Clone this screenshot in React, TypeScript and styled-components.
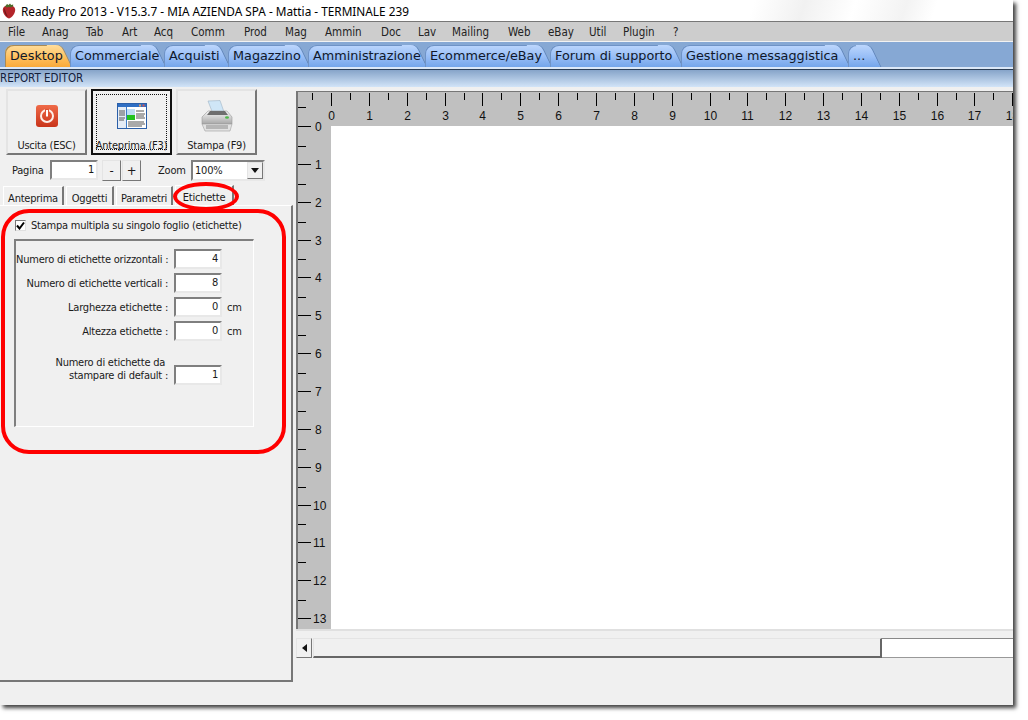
import React from 'react';
import styled, { createGlobalStyle } from 'styled-components';

const UI_FONT = '"DejaVu Sans Condensed", "DejaVu Sans", sans-serif';
const RULER_FONT = '"Liberation Sans", Arial, sans-serif';
const TAB_FONT = '"DejaVu Sans", Verdana, sans-serif';

const GlobalStyle = createGlobalStyle`
  html, body {
    margin: 0;
    padding: 0;
    background: #fff;
  }
  body {
    font-family: ${UI_FONT};
    font-stretch: condensed;
    font-size: 11px;
    letter-spacing: -0.22px;
    color: #1a1a1a;
  }
`;

const Page = styled.div`
  width: 1028px;
  height: 720px;
  overflow: hidden;
`;

const Window = styled.div`
  position: relative;
  width: 1013px;
  height: 705px;
  display: flex;
  flex-direction: column;
  background: #f0f0f0;
  box-shadow: 3px 3px 4px rgba(0, 0, 0, 0.75);
`;

const TitleBar = styled.div`
  height: 21px;
  display: flex;
  align-items: center;
  gap: 5px;
  padding-left: 2px;
  font-family: "Noto Sans", sans-serif;
  font-stretch: normal;
  font-size: 11.8px;
  letter-spacing: normal;
  color: #000;
  background: linear-gradient(108deg, #fff 0, #fff 74%, #f1f1f1 79%, #fff 84%, #f3f3f3 89%, #fff 92%);
  border-bottom: 1px solid #777;
`;

const MenuBar = styled.div`
  height: 19px;
  display: flex;
  align-items: center;
  padding-left: 8px;
  background: #cdcdcd;
  border-bottom: 1px solid #f2f2f2;
`;

const MenuItem = styled.span<{ $width: number }>`
  width: ${(p) => p.$width}px;
  font-size: 11.5px;
  letter-spacing: normal;
  color: #222;
`;

const TabBar = styled.div`
  height: 25px;
  display: flex;
  align-items: flex-end;
  padding-left: 5px;
  background: #86a8d4;
  border-bottom: 2px solid #dbe8f8;
  box-shadow: 0 2px 0 #2c3e55;
  margin-bottom: 1px;
`;

const tabFill = (active?: boolean) =>
  active
    ? 'linear-gradient(#ffdd9c, #ffc15e 55%, #f8a93a)'
    : 'linear-gradient(#bcd6fd, #96bdf6 55%, #74a5ea)';

const MainTab = styled.div<{ $width: number; $active?: boolean }>`
  position: relative;
  width: ${(p) => p.$width}px;
  height: 22px;
  box-sizing: border-box;
  padding-left: 5px;
  line-height: 21px;
  font-family: ${TAB_FONT};
  font-stretch: normal;
  font-size: 12.8px;
  letter-spacing: normal;
  color: #10182a;
  white-space: nowrap;
  &::before {
    content: '';
    position: absolute;
    left: 0;
    right: 10px;
    top: 0;
    bottom: 0;
    border-radius: 8px 4px 0 0;
    background: ${(p) => tabFill(p.$active)};
    box-shadow: inset 1px 1px 0 ${(p) => (p.$active ? '#a98a55' : '#6f93c6')};
  }
  &::after {
    content: '';
    position: absolute;
    right: 4px;
    top: 0;
    bottom: 0;
    width: 14px;
    transform: skewX(26deg);
    border-radius: 0 5px 0 0;
    background: ${(p) => tabFill(p.$active)};
    box-shadow: 1px 0 0 ${(p) => (p.$active ? '#a98a55' : '#5f84ba')};
  }
`;

const TabLabel = styled.span`
  position: relative;
  z-index: 1;
`;

const EditorHeader = styled.div`
  height: 17px;
  line-height: 16px;
  font-size: 11.5px;
  letter-spacing: normal;
  color: #14203a;
  background: linear-gradient(#86a4c9, #d2e4f8);
`;

const Body = styled.div`
  flex: 1;
  display: flex;
  min-height: 0;
`;

const LeftColumn = styled.div`
  width: 293px;
  margin-bottom: 23px;
  display: flex;
  flex-direction: column;
  padding-top: 2px;
  box-sizing: border-box;
`;

const ButtonRow = styled.div`
  display: flex;
  gap: 4px;
  padding-left: 6px;
`;

const ToolButton = styled.div<{ $focused?: boolean }>`
  width: 81px;
  height: 66px;
  box-sizing: border-box;
  display: flex;
  flex-direction: column;
  align-items: center;
  background: #f0f0f0;
  border: 2px solid;
  border-color: ${(p) => (p.$focused ? '#111' : '#e4e4e4 #777 #777 #e4e4e4')};
  line-height: 14px;
  white-space: nowrap;
  outline: ${(p) => (p.$focused ? '1px dotted #111' : 'none')};
  outline-offset: -6px;
`;

const IconSlot = styled.div`
  height: 47px;
  margin-top: 1px;
  display: flex;
  align-items: center;
  justify-content: center;
`;

const PagerRow = styled.div`
  display: flex;
  align-items: center;
  height: 22px;
  margin-top: 4px;
`;

const PagerLabel = styled.span<{ $left: number; $width: number }>`
  margin-left: ${(p) => p.$left}px;
  width: ${(p) => p.$width}px;
`;

const Sunken = styled.div<{ $width: number }>`
  width: ${(p) => p.$width}px;
  height: 20px;
  box-sizing: border-box;
  flex: none;
  background: #fff;
  border: 2px solid;
  border-color: #7f7f7f #e8e8e8 #e8e8e8 #7f7f7f;
  text-align: right;
  padding-right: 2px;
  line-height: 15px;
`;

const StepButton = styled.div<{ $left: number }>`
  width: 19px;
  height: 21px;
  margin-left: ${(p) => p.$left}px;
  box-sizing: border-box;
  border: 1px solid;
  border-color: #e4e4e4 #777 #777 #e4e4e4;
  text-align: center;
  line-height: 20px;
  font-size: 13px;
`;

const SelectBox = styled.div`
  width: 74px;
  height: 21px;
  box-sizing: border-box;
  display: flex;
  align-items: center;
  justify-content: space-between;
  background: #fff;
  border: 2px solid;
  border-color: #7f7f7f #e8e8e8 #e8e8e8 #7f7f7f;
  padding-left: 2px;
`;

const SelectArrow = styled.div`
  width: 16px;
  height: 17px;
  box-sizing: border-box;
  display: flex;
  align-items: center;
  justify-content: center;
  background: #f0f0f0;
  border: 1px solid;
  border-color: #e4e4e4 #777 #777 #e4e4e4;
  &::after {
    content: '';
    border: 4px solid transparent;
    border-top: 5px solid #111;
    border-bottom: none;
  }
`;

const PageTabs = styled.div`
  display: flex;
  align-items: flex-end;
  gap: 2px;
  height: 19px;
  margin-top: 5px;
  padding-left: 3px;
`;

const PageTab = styled.div<{ $width: number; $active?: boolean }>`
  width: ${(p) => p.$width}px;
  height: ${(p) => (p.$active ? 20 : 19)}px;
  box-sizing: border-box;
  text-align: center;
  line-height: 23px;
  border-top: 1px solid #fff;
  border-left: 1px solid #fff;
  border-right: 2px solid #777;
  background: #f0f0f0;
`;

const TabPage = styled.div`
  flex: 1;
  display: flex;
  flex-direction: column;
  box-sizing: border-box;
  border-top: 1px solid #fff;
  border-right: 2px solid #777;
  border-bottom: 2px solid #777;
  padding: 14px 0 0 15px;
`;

const CheckRow = styled.div`
  display: flex;
  align-items: center;
  gap: 5px;
  height: 11px;
`;

const CheckBox = styled.div`
  width: 11px;
  height: 11px;
  box-sizing: border-box;
  background: #fff;
  border: 1px solid;
  border-color: #777 #e0e0e0 #e0e0e0 #777;
  display: flex;
  align-items: center;
  justify-content: center;
`;

const GroupBox = styled.div`
  width: 240px;
  height: 188px;
  box-sizing: border-box;
  margin: 8px 0 0 -1px;
  padding-top: 8px;
  border: 2px solid;
  border-color: #7f7f7f #fff #fff #7f7f7f;
  border-right-width: 1px;
  border-bottom-width: 1px;
  display: flex;
  flex-direction: column;
`;

const FieldRow = styled.div<{ $gap?: number }>`
  display: flex;
  align-items: center;
  height: 20px;
  margin-bottom: ${(p) => p.$gap ?? 4}px;
`;

const FieldLabel = styled.div<{ $raised?: boolean }>`
  width: 152px;
  flex: none;
  text-align: right;
  line-height: 13px;
  white-space: nowrap;
  margin-right: 6px;
  margin-bottom: ${(p) => (p.$raised ? 12 : 0)}px;
`;

const Unit = styled.span`
  margin-left: 5px;
`;

const RightColumn = styled.div`
  flex: 1;
  min-width: 0;
  display: flex;
  flex-direction: column;
  margin-left: 3px;
  padding-top: 4px;
`;

const RulerFrame = styled.div`
  height: 538px;
  display: flex;
  flex-direction: column;
  overflow: hidden;
  border-bottom: 2px solid #e0e0e0;
`;

const SheetRow = styled.div`
  flex: 1;
  display: flex;
  min-height: 0;
`;

const RulerSvg = styled.svg`
  display: block;
  flex: none;
  overflow: visible;
  font-family: ${RULER_FONT};
  font-stretch: normal;
  font-size: 12px;
  letter-spacing: normal;
`;

const Sheet = styled.div`
  flex: 1;
  background: #fff;
`;

const ScrollBar = styled.div`
  display: flex;
  height: 20px;
  margin-top: 7px;
`;

const ScrollArrow = styled.div`
  width: 16px;
  box-sizing: border-box;
  display: flex;
  align-items: center;
  justify-content: center;
  border: 1px solid;
  border-color: #e4e4e4 #777 #777 #e4e4e4;
  &::after {
    content: '';
    border: 4px solid transparent;
    border-right: 5px solid #111;
    border-left: none;
  }
`;

const ScrollThumb = styled.div`
  width: 569px;
  margin-left: 1px;
  box-sizing: border-box;
  border: 1px solid;
  border-color: #e4e4e4 #666 #666 #e4e4e4;
  border-right-width: 2px;
  border-bottom-width: 2px;
`;

const ScrollTrack = styled.div`
  flex: 1;
  background: #fff;
  border-top: 1px solid #888;
  border-bottom: 1px solid #999;
`;

const Annotation = styled.div<{ $x: number; $y: number; $w: number; $h: number; $radius: string }>`
  position: absolute;
  left: ${(p) => p.$x}px;
  top: ${(p) => p.$y}px;
  width: ${(p) => p.$w}px;
  height: ${(p) => p.$h}px;
  box-sizing: border-box;
  border: 4px solid #ff0000;
  border-radius: ${(p) => p.$radius};
  pointer-events: none;
`;

const StrawberryIcon = () => (
  <svg width="14" height="16" viewBox="0 0 14 16">
    <path d="M7 3C3.500 2.200 1 3.600.8 6.600.6 10 3.800 15 7 15.600c3.200-.6 6.400-5.600 6.200-9C13 3.600 10.500 2.200 7 3z" fill="#b3252a" />
    <path d="M2.500 5c.8 3 1.800 6 3.500 9C3.400 12.500 1.600 8.500 2.500 5z" fill="#6a1518" />
    <path d="M3 3.400 5 1l1.600 1L8 .4 9.200 2l2-.4L11 3.600 8 4.400 7 3.800 5 4.600z" fill="#4e6b2a" />
  </svg>
);

const PowerIcon = () => (
  <svg width="24" height="24" viewBox="0 0 24 24">
    <defs>
      <linearGradient id="pw" x1="0" y1="0" x2="0" y2="1">
        <stop offset="0" stopColor="#ef6a48" />
        <stop offset="1" stopColor="#c9341a" />
      </linearGradient>
    </defs>
    <rect x="1" y="1" width="22" height="22" rx="3" fill="url(#pw)" />
    <circle cx="12" cy="12" r="6" fill="none" stroke="#fdeee8" strokeWidth="2" />
    <rect x="10" y="5" width="4" height="4" fill="#df5233" />
    <rect x="11" y="6" width="2" height="6.500" fill="#fff" />
  </svg>
);

const PreviewIcon = () => (
  <svg width="30" height="26" viewBox="0 0 30 26">
    <rect x=".5" y=".5" width="29" height="25" fill="#fff" stroke="#2b5fa8" />
    <rect x="1" y="1" width="28" height="3" fill="#2f6fc4" />
    <rect x="22" y="1.500" width="2" height="2" fill="#e8a060" />
    <rect x="25.500" y="1.500" width="2" height="2" fill="#d9534f" />
    <rect x="1" y="4" width="8" height="21" fill="#e4ecf6" />
    <rect x="9" y="4" width="1" height="21" fill="#3e7cc8" />
    <path d="M2 8h6M2 10h6M2 12h6M2 15h6M2 17h5" stroke="#555" />
    <rect x="10" y="6" width="8" height="6" fill="#bcdcf2" />
    <rect x="10" y="12" width="8" height="5" fill="#22c21e" />
    <path d="M19 8h8M19 11h9M19 13h8M19 15h9M11 19h16M11 21h17M11 23h14" stroke="#555" />
  </svg>
);

const PrinterIcon = () => (
  <svg width="32" height="32" viewBox="0 0 32 32">
    <defs>
      <linearGradient id="pb" x1="0" y1="0" x2="0" y2="1">
        <stop offset="0" stopColor="#f6f6f6" />
        <stop offset="1" stopColor="#a8a8a8" />
      </linearGradient>
    </defs>
    <path d="M7 1 19 .5 23 12 12 14z" fill="#cfe6f7" stroke="#9fb4c4" strokeWidth=".6" />
    <path d="M1 17 7 11h19l5 6v7H1z" fill="url(#pb)" stroke="#9a9a9a" strokeWidth=".6" />
    <path d="M9 11h15l3 4H6z" fill="#6e6e6e" />
    <path d="M1 24h30l-2 7H4z" fill="#e2e2e2" stroke="#a0a0a0" strokeWidth=".6" />
    <path d="M5 26h22M5 28h22" stroke="#8a8a8a" />
    <ellipse cx="26" cy="17.500" rx="2" ry="1.300" fill="#4fb84a" />
  </svg>
);

const CheckMark = () => (
  <svg width="9" height="9" viewBox="0 0 9 9">
    <path d="M1 4.500 3.500 7.500 8 1.500" fill="none" stroke="#000" strokeWidth="2" />
  </svg>
);

const MAJOR = 37.85;
const ORIGIN = 35;

const TopRuler = () => {
  const ticks = Array.from({ length: 19 }, (_, i) => i);
  return (
    <RulerSvg width="717" height="35">
      <rect width="717" height="35" fill="#c0c0c0" />
      <rect width="717" height="1" fill="#777" />
      <rect width="2" height="35" fill="#777" />
      <path d="M16.500 2v7M2 16.500h8" stroke="#000" />
      {ticks.map((i) => {
        const x = Math.round(ORIGIN + i * MAJOR) + 0.5;
        return (
          <g key={i}>
            <path d={`M${x} 2v13`} stroke="#000" />
            <path d={`M${Math.round(x + MAJOR / 2) + 0.5} 2v7`} stroke="#000" />
            <text x={x} y={29} textAnchor="middle" fill="#111">
              {i}
            </text>
          </g>
        );
      })}
    </RulerSvg>
  );
};

const LeftRuler = () => {
  const ticks = Array.from({ length: 14 }, (_, i) => i);
  return (
    <RulerSvg width="35" height="503">
      <rect width="35" height="503" fill="#c0c0c0" />
      <rect width="2" height="503" fill="#777" />
      {ticks.map((i) => {
        const y = Math.round(i * MAJOR) + 0.5;
        return (
          <g key={i}>
            {i > 0 && <path d={`M2 ${Math.round(y - MAJOR / 2) + 0.5}h8`} stroke="#000" />}
            <path d={`M2 ${y}h13`} stroke="#000" />
            <text x={i > 9 ? 17 : 19} y={y + 4} fill="#111">
              {i}
            </text>
          </g>
        );
      })}
    </RulerSvg>
  );
};

const MENU_ITEMS: [string, number][] = [
  ['File', 34],
  ['Anag', 44],
  ['Tab', 36],
  ['Art', 32],
  ['Acq', 37],
  ['Comm', 53],
  ['Prod', 41],
  ['Mag', 40],
  ['Ammin', 56],
  ['Doc', 37],
  ['Lav', 34],
  ['Mailing', 56],
  ['Web', 40],
  ['eBay', 41],
  ['Util', 34],
  ['Plugin', 50],
  ['?', 12],
];

const MAIN_TABS: [string, number][] = [
  ['Desktop', 65],
  ['Commerciale', 94],
  ['Acquisti', 64],
  ['Magazzino', 80],
  ['Amministrazione', 117],
  ['Ecommerce/eBay', 125],
  ['Forum di supporto', 131],
  ['Gestione messaggistica', 167],
  ['...', 31],
];

export default function App() {
  return (
    <Page>
      <GlobalStyle />
      <Window>
        <TitleBar>
          <StrawberryIcon />
          Ready Pro 2013 - V15.3.7 - MIA AZIENDA SPA - Mattia - TERMINALE 239
        </TitleBar>
        <MenuBar>
          {MENU_ITEMS.map(([label, width]) => (
            <MenuItem key={label} $width={width}>
              {label}
            </MenuItem>
          ))}
        </MenuBar>
        <TabBar>
          {MAIN_TABS.map(([label, width], idx) => (
            <MainTab key={label} $width={width} $active={idx === 0}>
              <TabLabel>{label}</TabLabel>
            </MainTab>
          ))}
        </TabBar>
        <EditorHeader>REPORT EDITOR</EditorHeader>
        <Body>
          <LeftColumn>
            <ButtonRow>
              <ToolButton>
                <IconSlot>
                  <PowerIcon />
                </IconSlot>
                Uscita (ESC)
              </ToolButton>
              <ToolButton $focused>
                <IconSlot>
                  <PreviewIcon />
                </IconSlot>
                Anteprima (F3)
              </ToolButton>
              <ToolButton>
                <IconSlot>
                  <PrinterIcon />
                </IconSlot>
                Stampa (F9)
              </ToolButton>
            </ButtonRow>
            <PagerRow>
              <PagerLabel $left={12} $width={38}>
                Pagina
              </PagerLabel>
              <Sunken $width={48}>1</Sunken>
              <StepButton $left={4}>-</StepButton>
              <StepButton $left={1}>+</StepButton>
              <PagerLabel $left={17} $width={33}>
                Zoom
              </PagerLabel>
              <SelectBox>
                100%
                <SelectArrow />
              </SelectBox>
            </PagerRow>
            <PageTabs>
              <PageTab $width={61}>Anteprima</PageTab>
              <PageTab $width={48}>Oggetti</PageTab>
              <PageTab $width={57}>Parametri</PageTab>
              <PageTab $width={59} $active>
                Etichette
              </PageTab>
            </PageTabs>
            <TabPage>
              <CheckRow>
                <CheckBox>
                  <CheckMark />
                </CheckBox>
                Stampa multipla su singolo foglio (etichette)
              </CheckRow>
              <GroupBox>
                <FieldRow>
                  <FieldLabel>Numero di etichette orizzontali :</FieldLabel>
                  <Sunken $width={48}>4</Sunken>
                </FieldRow>
                <FieldRow>
                  <FieldLabel>Numero di etichette verticali :</FieldLabel>
                  <Sunken $width={48}>8</Sunken>
                </FieldRow>
                <FieldRow>
                  <FieldLabel>Larghezza etichette :</FieldLabel>
                  <Sunken $width={48}>0</Sunken>
                  <Unit>cm</Unit>
                </FieldRow>
                <FieldRow $gap={24}>
                  <FieldLabel>Altezza etichette :</FieldLabel>
                  <Sunken $width={48}>0</Sunken>
                  <Unit>cm</Unit>
                </FieldRow>
                <FieldRow>
                  <FieldLabel $raised>
                    Numero di etichette da&nbsp;
                    <br />
                    stampare di default :
                  </FieldLabel>
                  <Sunken $width={48}>1</Sunken>
                </FieldRow>
              </GroupBox>
            </TabPage>
          </LeftColumn>
          <RightColumn>
            <RulerFrame>
              <TopRuler />
              <SheetRow>
                <LeftRuler />
                <Sheet />
              </SheetRow>
            </RulerFrame>
            <ScrollBar>
              <ScrollArrow />
              <ScrollThumb />
              <ScrollTrack />
            </ScrollBar>
          </RightColumn>
        </Body>
        <Annotation $x={173} $y={182} $w={66} $h={29} $radius="50%" />
        <Annotation $x={1} $y={209} $w={285} $h={245} $radius="28px" />
      </Window>
    </Page>
  );
}
